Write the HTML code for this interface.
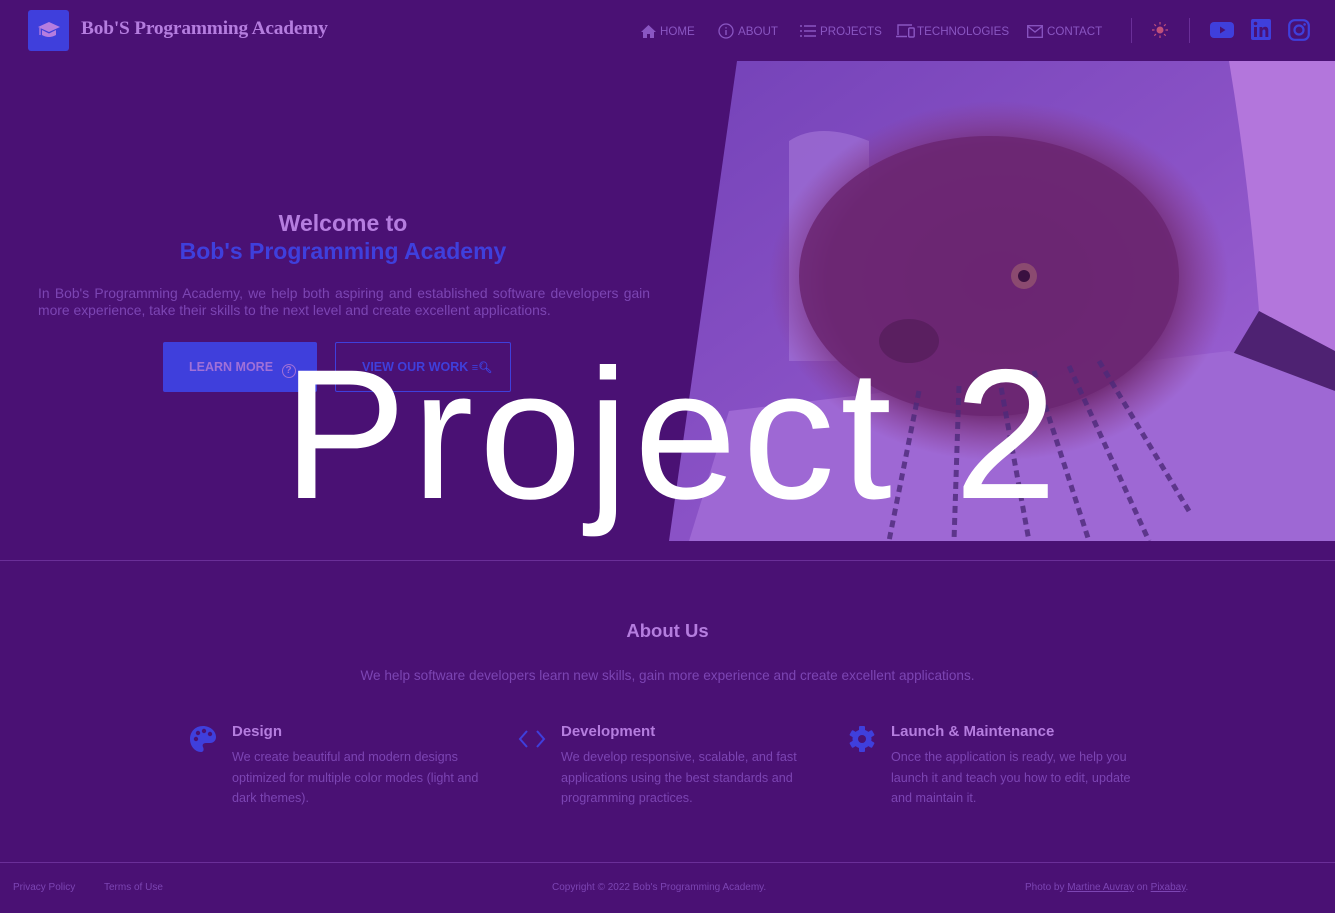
<!DOCTYPE html>
<html><head><meta charset="utf-8">
<style>
*{margin:0;padding:0;box-sizing:border-box}
body{width:1335px;height:913px;overflow:hidden;background:#4a1174;font-family:"Liberation Sans",sans-serif;position:relative;color:#8c55c4}
.abs{position:absolute}
.nav{position:absolute;top:23px;font-size:11.6px;color:#8a56c2;display:flex;align-items:center;gap:4px;height:16px}
.t{color:#b57ddf}
.b{color:#3f3fdc}
.p{font-size:12.6px;line-height:20.5px;color:#7c45b3}
</style></head><body>
<div class="abs" style="left:28px;top:10px;width:41px;height:41px;background:#3f3fdc;border-radius:3px"></div>
<svg class="abs" style="left:37px;top:20px" width="24" height="20" viewBox="0 0 24 20"><path d="M12 2 L23 7 L12 12 L1 7Z" fill="#b57ddf"/><path d="M5 10 V15 Q12 19 19 15 V10 L12 13.5Z" fill="#b57ddf"/><path d="M3 8 V15" stroke="#b57ddf" stroke-width="1.3"/></svg>
<div class="abs" style="left:81px;top:18px;font-family:'Liberation Serif',serif;font-size:19.4px;font-weight:bold;color:#b57ddf;letter-spacing:-0.2px">Bob'S Programming Academy</div>

<div class="nav" style="left:641px"><svg width="15" height="13" viewBox="0 0 15 13"><path d="M7.5 0L15 7H13V13H9V9H6V13H2V7H0Z" fill="#8a56c2"/></svg>HOME</div>
<div class="nav" style="left:718px"><svg width="16" height="16" viewBox="0 0 16 16"><circle cx="8" cy="8" r="7" fill="none" stroke="#8a56c2" stroke-width="1.3"/><path d="M8 7V12M8 4.3V5.5" stroke="#8a56c2" stroke-width="1.4"/></svg>ABOUT</div>
<div class="nav" style="left:800px"><svg width="16" height="14" viewBox="0 0 16 14"><path d="M0 2H2M4 2H16M0 7H2M4 7H16M0 12H2M4 12H16" stroke="#8a56c2" stroke-width="1.4"/></svg>PROJECTS</div>
<div class="nav" style="left:896px;gap:1px"><svg width="20" height="14" viewBox="0 0 20 14"><path d="M2 11V1H16M0 12.5H11" stroke="#8a56c2" stroke-width="1.4" fill="none"/><rect x="12.7" y="4" width="5.5" height="9" rx="1" fill="none" stroke="#8a56c2" stroke-width="1.4"/></svg>TECHNOLOGIES</div>
<div class="nav" style="left:1027px"><svg width="16" height="13" viewBox="0 0 16 13"><rect x="0.7" y="0.7" width="14.6" height="11.6" fill="none" stroke="#8a56c2" stroke-width="1.3"/><path d="M1 1.5L8 7L15 1.5" fill="none" stroke="#8a56c2" stroke-width="1.3"/></svg>CONTACT</div>
<div class="abs" style="left:1131px;top:18px;width:1px;height:25px;background:#6a2f98"></div>
<div class="abs" style="left:1189px;top:18px;width:1px;height:25px;background:#6a2f98"></div>
<svg class="abs" style="left:1152px;top:22px" width="16" height="16" viewBox="0 0 16 16"><circle cx="8" cy="8" r="3.5" fill="#c0507a"/><path d="M8 0V2.5M8 13.5V16M0 8H2.5M13.5 8H16M2.3 2.3L4 4M12 12L13.7 13.7M2.3 13.7L4 12M12 4L13.7 2.3" stroke="#c0507a" stroke-width="1.2"/></svg>
<svg class="abs" style="left:1210px;top:20px" width="24" height="20" viewBox="0 0 24 20"><rect x="0" y="2" width="24" height="16" rx="4" fill="#3f3fdc"/><path d="M10 6.5L15.5 10L10 13.5Z" fill="#4a1174"/></svg>
<svg class="abs" style="left:1251px;top:19px" width="20" height="21" viewBox="0 0 20 21"><rect x="0" y="0" width="20" height="21" rx="2" fill="#3f3fdc"/><rect x="3" y="8" width="3" height="10" fill="#4a1174"/><circle cx="4.5" cy="4.5" r="1.8" fill="#4a1174"/><path d="M8.5 8H11.3V9.5Q12.5 7.7 14.5 7.8Q17.3 8 17.3 11.5V18H14.4V12.3Q14.4 10.5 13 10.5Q11.4 10.5 11.4 12.5V18H8.5Z" fill="#4a1174"/></svg>
<svg class="abs" style="left:1288px;top:19px" width="22" height="22" viewBox="0 0 22 22"><rect x="1.2" y="1.2" width="19.6" height="19.6" rx="5.5" fill="none" stroke="#3f3fdc" stroke-width="2.2"/><circle cx="11" cy="11" r="4.5" fill="none" stroke="#3f3fdc" stroke-width="2.2"/><circle cx="16.6" cy="5.4" r="1.3" fill="#3f3fdc"/></svg>

<svg class="abs" style="left:669px;top:61px" width="666" height="480" viewBox="0 0 666 480">
<defs>
<clipPath id="c"><path d="M68 0H666V480H0Z"/></clipPath>
<linearGradient id="bg" x1="0" y1="0" x2="1" y2="1"><stop offset="0" stop-color="#7442b8"/><stop offset="0.5" stop-color="#8a52c6"/><stop offset="1" stop-color="#a468d8"/></linearGradient>
<radialGradient id="dog" cx="0.5" cy="0.5" r="0.5"><stop offset="0" stop-color="#6a2570"/><stop offset="0.75" stop-color="#74307c"/><stop offset="1" stop-color="#8a3d8e" stop-opacity="0"/></radialGradient>
</defs>
<g clip-path="url(#c)">
<rect width="666" height="480" fill="url(#bg)"/>
<path d="M120 80Q150 60 200 80V300H120Z" fill="#a172d6" opacity="0.7"/>
<path d="M560 0H666V290L590 250Q580 120 560 0Z" fill="#b376dc"/>
<path d="M590 250L666 290V330L560 300Z" fill="#4e2272"/>
<path d="M60 350L560 290L666 330V480H20Z" fill="#9e68d4"/>
<ellipse cx="330" cy="220" rx="230" ry="180" fill="url(#dog)"/>
<ellipse cx="320" cy="215" rx="190" ry="140" fill="#6b2672" opacity="0.85"/>
<ellipse cx="240" cy="280" rx="30" ry="22" fill="#5a1f60"/>
<circle cx="355" cy="215" r="13" fill="#8b4a70"/><circle cx="355" cy="215" r="6" fill="#3a1040"/>
<g stroke="#4d2a7a" stroke-width="5" stroke-dasharray="7 5" opacity="0.8">
<path d="M250 330L220 480"/><path d="M290 325L285 480"/><path d="M330 315L360 480"/><path d="M365 310L420 480"/><path d="M400 305L480 480"/><path d="M430 300L520 450"/>
</g>
</g>
</svg>

<div class="abs t" style="left:0;width:686px;top:210px;text-align:center;font-size:23px;font-weight:bold">Welcome to</div>
<div class="abs b" style="left:0;width:686px;top:238px;text-align:center;font-size:23px;font-weight:bold">Bob's Programming Academy</div>
<div class="abs" style="left:38px;width:612px;top:285px;font-size:13.9px;line-height:16.5px;color:#7c45b3;text-align:justify;text-align-last:left">In Bob's Programming Academy, we help both aspiring and established software developers gain more experience, take their skills to the next level and create excellent applications.</div>
<div class="abs" style="left:163px;top:342px;width:154px;height:50px;background:#3f3fdc;border-radius:2px;color:#a070d8;font-size:12.5px;font-weight:bold;line-height:50px;padding-left:26px">LEARN MORE <span style="display:inline-block;width:14px;height:14px;border:1.3px solid #a070d8;border-radius:50%;font-size:10px;line-height:12px;text-align:center;vertical-align:-2px;margin-left:5px">?</span></div>
<div class="abs" style="left:335px;top:342px;width:176px;height:50px;border:1px solid #3f3fdc;border-radius:2px;color:#3f3fdc;font-size:12.5px;font-weight:bold;line-height:48px;padding-left:26px">VIEW OUR WORK <span style="font-size:11px">≡🔍︎</span></div>

<div class="abs" style="left:283px;top:343px;font-size:185px;line-height:1;color:#fff;letter-spacing:5.5px;white-space:nowrap">Project 2</div>

<div class="abs" style="left:0;top:560px;width:1335px;height:1px;background:#6a2f98"></div>

<div class="abs t" style="left:0;width:1335px;top:620px;text-align:center;font-size:18.5px;font-weight:bold">About Us</div>
<div class="abs" style="left:0;width:1335px;top:668px;text-align:center;font-size:13.6px;color:#7c45b3">We help software developers learn new skills, gain more experience and create excellent applications.</div>

<svg class="abs" style="left:189px;top:725px" width="28" height="28" viewBox="0 0 28 28"><path d="M14 1C6 1 1 7 1 14C1 21 6 27 12 27C15 27 15 24 14 22C13 20 14 18 17 18H21C25 18 27 15 27 12C27 6 21 1 14 1Z" fill="#3f3fdc"/><circle cx="7" cy="14" r="2.2" fill="#4a1174"/><circle cx="9" cy="8" r="2.2" fill="#4a1174"/><circle cx="15" cy="6" r="2.2" fill="#4a1174"/><circle cx="21" cy="9" r="2.2" fill="#4a1174"/></svg>
<div class="abs t" style="left:232px;top:723px;font-size:15px;font-weight:bold">Design</div>
<div class="abs p" style="left:232px;top:747px;width:260px">We create beautiful and modern designs optimized for multiple color modes (light and dark themes).</div>

<svg class="abs" style="left:518px;top:729px" width="28" height="20" viewBox="0 0 28 20"><path d="M9 2L2 10L9 18M19 2L26 10L19 18" fill="none" stroke="#3f3fdc" stroke-width="2"/></svg>
<div class="abs t" style="left:561px;top:723px;font-size:15px;font-weight:bold">Development</div>
<div class="abs p" style="left:561px;top:747px;width:250px">We develop responsive, scalable, and fast applications using the best standards and programming practices.</div>

<svg class="abs" style="left:848px;top:725px" width="28" height="28" viewBox="0 0 28 28"><g fill="#3f3fdc"><circle cx="14" cy="14" r="9.5"/><rect x="11" y="1" width="6" height="26" rx="1"/><rect x="11" y="1" width="6" height="26" rx="1" transform="rotate(60 14 14)"/><rect x="11" y="1" width="6" height="26" rx="1" transform="rotate(120 14 14)"/></g><circle cx="14" cy="14" r="4" fill="#4a1174"/></svg>
<div class="abs t" style="left:891px;top:723px;font-size:15px;font-weight:bold">Launch &amp; Maintenance</div>
<div class="abs p" style="left:891px;top:747px;width:250px">Once the application is ready, we help you launch it and teach you how to edit, update and maintain it.</div>

<div class="abs" style="left:0;top:862px;width:1335px;height:1px;background:#6a2f98"></div>
<div class="abs" style="left:13px;top:882px;font-size:10px;color:#7c45b3">Privacy Policy</div>
<div class="abs" style="left:104px;top:882px;font-size:10px;color:#7c45b3">Terms of Use</div>
<div class="abs" style="left:552px;top:882px;font-size:10px;color:#7c45b3">Copyright © 2022 Bob's Programming Academy.</div>
<div class="abs" style="left:1025px;top:882px;font-size:10px;color:#7c45b3">Photo by <u>Martine Auvray</u> on <u>Pixabay</u>.</div>
</body></html>
